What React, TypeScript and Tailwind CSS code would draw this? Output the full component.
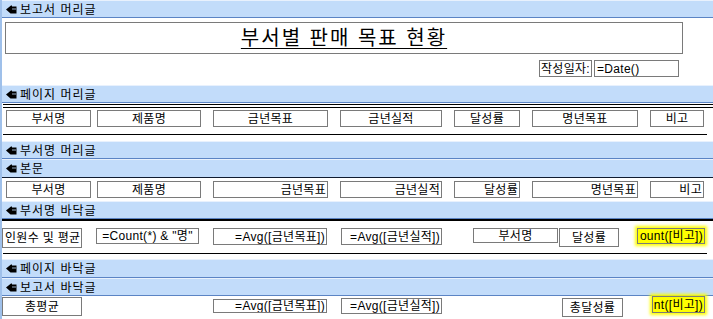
import React from "react";

const Hand = () => (
  <svg width="11" height="9" viewBox="0 0 11 9" className="shrink-0">
    <path d="M0 4.5 L5 0.5 L6 0.5 L6 1.5 L10.5 1.5 L10.5 8.5 L4.5 8.5 Z" fill="#000" />
    <path d="M6 4 L10 4" stroke="#c2dcfa" strokeWidth="0.8" />
  </svg>
);

const Band = ({ label, h = "h-[18px]", bottom = "border-b-[#5b84c4]" }: { label: string; h?: string; bottom?: string }) => (
  <div className={`${h} flex items-center gap-[3px] pl-[4px] bg-[#c2dcfa] border-t border-t-[#e8f1fd] border-b ${bottom} text-[12px] leading-none tracking-[1px] text-black`}>
    <Hand />
    <span className="pt-[1px]">{label}</span>
  </div>
);

type Align = "left" | "center" | "right";

const alignCls = (a: Align) =>
  a === "center" ? "justify-center" : a === "right" ? "justify-end pr-[1px]" : "justify-start pl-[2px]";

// Control on the report design canvas (free positioning is the content itself)
const Ctl = ({
  x,
  y,
  w,
  h,
  text,
  align = "center",
  hl = false,
}: {
  x: number;
  y: number;
  w: number;
  h: number;
  text: string;
  align?: Align;
  hl?: boolean;
}) => (
  <div
    className={`absolute border border-[#7a7a7a] flex items-center overflow-hidden whitespace-nowrap text-[12px] leading-none tracking-[0.3px] text-black ${alignCls(
      align
    )} ${hl ? "bg-[#ffff00] shadow-[0_0_3px_2px_#ffff00]" : "bg-white"}`}
    style={{ left: x, top: y, width: w, height: h }}
  >
    <span>{text}</span>
  </div>
);

// Control in a flowing row
const Cell = ({ w, text, align = "center" }: { w: string; text: string; align?: Align }) => (
  <div
    className={`${w} h-[17px] shrink-0 border border-[#7a7a7a] bg-white flex items-center whitespace-nowrap text-[12px] leading-none tracking-[0.3px] text-black ${alignCls(
      align
    )}`}
  >
    <span>{text}</span>
  </div>
);

const Row = ({ right }: { right: boolean }) => (
  <div className="flex gap-[12px] pl-[4px]">
    <div className="flex gap-[6px]">
      <Cell w="w-[85px]" text="부서명" />
      <Cell w="w-[104px]" text="제품명" />
    </div>
    <Cell w="w-[115px]" text="금년목표" align={right ? "right" : "center"} />
    <Cell w="w-[102px]" text="금년실적" align={right ? "right" : "center"} />
    <Cell w="w-[66px]" text="달성률" align={right ? "right" : "center"} />
    <Cell w="w-[106px]" text="명년목표" align={right ? "right" : "center"} />
    <Cell w="w-[54px]" text="비고" align={right ? "right" : "center"} />
  </div>
);

export default function App() {
  return (
    <div className="w-[713px] h-[319px] overflow-hidden bg-white border-l-2 border-l-[#9fc0ea] font-['Liberation_Sans','Noto_Sans_CJK_KR',sans-serif]">
      <Band label="보고서 머리글" />
      <div className="h-[67px] flex flex-col pt-[4px]">
        <div className="ml-[3px] w-[678px] h-[32px] border border-[#7a7a7a] flex items-center justify-center">
          <span className="text-[20px] leading-none underline underline-offset-[3px] decoration-1 tracking-[2px] text-black">
            부서별 판매 목표 현황
          </span>
        </div>
        <div className="flex items-start gap-[2px] ml-[537px] mt-[6px]">
          <Cell w="w-[53px]" text="작성일자:" />
          <Cell w="w-[85px]" text="=Date()" align="left" />
        </div>
      </div>
      <Band label="페이지 머리글" />
      <div className="h-[38px] flex flex-col pt-[1px]">
        <div className="h-px bg-black ml-[1px]" />
        <div className="h-px bg-black ml-[1px] mt-[2px]" />
        <div className="mt-[2px]">
          <Row right={false} />
        </div>
        <div className="h-px bg-black ml-[1px] mr-[6px] mt-[7px]" />
      </div>
      <Band label="부서명 머리글" />
      <Band label="본문" h="h-[19px]" bottom="border-b-[#101c30]" />
      <div className="h-[23px] pt-[3px]">
        <Row right />
      </div>
      <Band label="부서명 바닥글" />
      <div className="relative h-[40px]">
        <div className="h-[2px] bg-black" />
        <Ctl x={0} y={9} w={80} h={20} text="인원수 및 평균" align="left" />
        <Ctl x={94} y={9} w={103} h={16} text={'=Count(*) & "명"'} />
        <Ctl x={211} y={9} w={114} h={17} text="=Avg([금년목표])" align="right" />
        <Ctl x={339} y={9} w={101} h={17} text="=Avg([금년실적])" align="right" />
        <Ctl x={471} y={9} w={85} h={15} text="부서명" />
        <Ctl x={557} y={9} w={60} h={19} text="달성률" />
        <Ctl x={635} y={9} w={68} h={16} text="ount([비고])" align="right" hl />
        <div className="absolute left-[1px] top-[34px] w-[704px] h-px bg-black" />
      </div>
      <Band label="페이지 바닥글" h="h-[19px]" />
      <Band label="보고서 바닥글" />
      <div className="relative h-[30px]">
        <Ctl x={0} y={1} w={80} h={19} text="총평균" />
        <Ctl x={211} y={3} w={114} h={14} text="=Avg([금년목표])" align="right" />
        <Ctl x={339} y={2} w={101} h={16} text="=Avg([금년실적])" align="right" />
        <Ctl x={560} y={2} w={61} h={19} text="총달성률" />
        <Ctl x={650} y={0} w={53} h={17} text="nt([비고])" align="right" hl />
      </div>
    </div>
  );
}
